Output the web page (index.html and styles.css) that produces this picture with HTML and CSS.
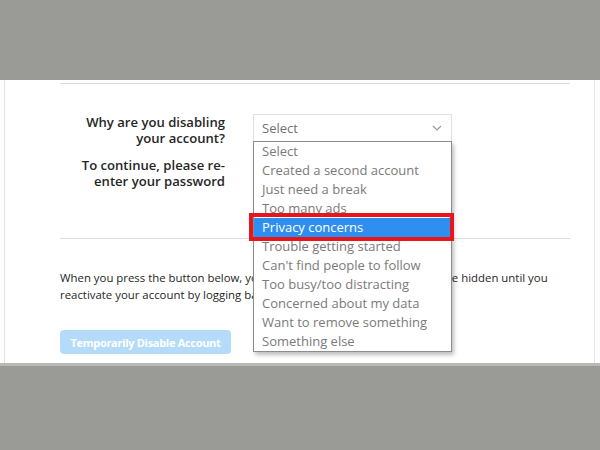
FILE: index.html
```html
<html>
    <head>
        <meta charset="utf-8" />
        <link rel="stylesheet" href="styles.css">
    </head>
    <body>
        <div class="band"></div>

        <div class="page">
            <div class="frame">
                <div class="rule"></div>

                <div class="form">
                    <div class="label">Why are you disabling<br>your account?</div>
                    <div class="control">
                        <div class="select">
                            <span>Select</span>
                            <svg class="chevron" width="10" height="6" viewBox="0 0 10 6">
                                <path d="M1 1 L5 5 L9 1" fill="none" stroke="#9a9a9a" stroke-width="1.2"/>
                            </svg>
                        </div>
                        <ul class="options">
                            <li>Select</li>
                            <li>Created a second account</li>
                            <li>Just need a break</li>
                            <li>Too many ads</li>
                            <li class="active">Privacy concerns<span class="mark"></span></li>
                            <li>Trouble getting started</li>
                            <li>Can't find people to follow</li>
                            <li>Too busy/too distracting</li>
                            <li>Concerned about my data</li>
                            <li>Want to remove something</li>
                            <li>Something else</li>
                        </ul>
                    </div>

                    <div class="label">To continue, please re-<br>enter your password</div>
                    <div class="control"></div>
                </div>

                <div class="rule lower"></div>

                <p class="note">When you press the button below, your photos, comments and likes will be hidden until you<br>reactivate your account by logging back in.</p>

                <button class="disable">Temporarily Disable Account</button>
            </div>
        </div>

        <div class="band bottom"></div>
    </body>
</html>
```

FILE: styles.css
```css
body {
    margin: 0;
    background-color: #9a9a96;
    font-family: "Open Sans", "Noto Sans", sans-serif;
    color: #262626;
}

.band {
    height: 80px;
}

.band.bottom {
    height: 84px;
    border-top: 3px solid #b9b9b6;
}

.page {
    background-color: white;
    height: 283px;
    padding: 0 5px 0 4px;
}

.frame {
    height: 100%;
    border-left: 1px solid #e4e4e4;
    border-right: 1px solid #e4e4e4;
    padding: 3px 0 0 55px;
    box-sizing: border-box;
}

.rule {
    width: 510px;
    border-top: 1px solid #dcdcdc;
}

.form {
    display: grid;
    grid-template-columns: 165px 199px;
    column-gap: 28px;
    row-gap: 11px;
    margin-top: 30px;
}

.label {
    text-align: right;
    font-size: 13.1px;
    font-weight: 600;
    line-height: 16px;
}

.control {
    position: relative;
}

.select {
    height: 27px;
    border: 1px solid #e2e2e2;
    border-bottom: none;
    box-sizing: border-box;
    display: flex;
    align-items: center;
    justify-content: space-between;
    padding: 0 9px 0 8px;
    font-size: 13px;
    color: #707070;
}

.options {
    position: absolute;
    top: 27px;
    left: 0;
    width: 199px;
    margin: 0;
    padding: 0;
    list-style: none;
    background-color: white;
    border: 1px solid #8c8c8c;
    box-sizing: border-box;
    box-shadow: 2px 3px 4px rgba(0, 0, 0, 0.25);
    z-index: 2;
}

.options li {
    position: relative;
    height: 19px;
    line-height: 19px;
    padding-left: 8px;
    font-size: 13px;
    color: #7a7a7a;
    white-space: nowrap;
}

.options li.active {
    background-color: #2f8ff0;
    color: white;
}

.mark {
    position: absolute;
    left: -5px;
    right: -3px;
    top: -5px;
    bottom: -4px;
    border: 4px solid #e8161c;
}

.lower {
    margin-top: 49px;
}

.note {
    margin: 30px 0 0 0;
    font-size: 11.4px;
    line-height: 17px;
    white-space: nowrap;
}

.disable {
    margin-top: 27px;
    width: 171px;
    height: 24px;
    border: none;
    border-radius: 4px;
    background-color: #b4dcfa;
    color: white;
    font-family: "Open Sans", "Noto Sans", sans-serif;
    font-size: 11px;
    font-weight: 700;
    letter-spacing: -0.3px;
    white-space: nowrap;
    padding: 0;
}
```
